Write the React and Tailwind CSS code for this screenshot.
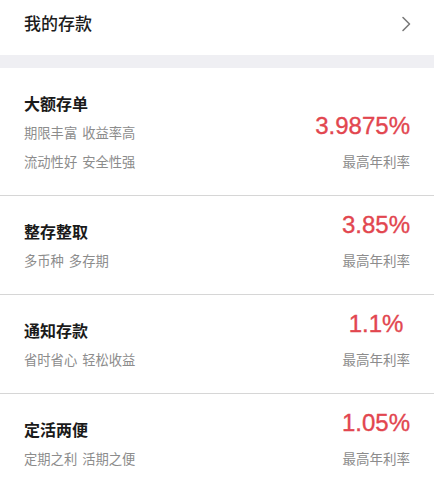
import React from "react";

const items = [
  { title: "大额存单", subs: ["期限丰富 收益率高", "流动性好 安全性强"], rate: "3.9875%" },
  { title: "整存整取", subs: ["多币种 多存期"], rate: "3.85%" },
  { title: "通知存款", subs: ["省时省心 轻松收益"], rate: "1.1%" },
  { title: "定活两便", subs: ["定期之利 活期之便"], rate: "1.05%" },
];

const cjk = { fontFamily: '"Noto Sans CJK SC", "Noto Sans", sans-serif' };

export default function App() {
  return (
    <div className="w-[434px] h-[493px] overflow-hidden bg-white" style={cjk}>
      <div className="h-[55px] flex items-start justify-between pl-6 pr-[22px] pt-[11px]">
        <span className="text-[17px] leading-[24px] font-medium text-[#1c1c1c]">我的存款</span>
        <svg className="mt-[5px]" width="11" height="16" viewBox="0 0 11 16" fill="none">
          <path d="M2 1.5 L8.5 8 L2 14.5" stroke="#7a7a7a" strokeWidth="1.6" strokeLinecap="round" strokeLinejoin="round" />
        </svg>
      </div>
      <div className="h-[13px] bg-[#efeff3]" />
      {items.map((it, i) => (
        <div
          key={i}
          className={`flex justify-between pl-6 pr-[24px] pt-6 pb-[23px] ${i < items.length - 1 ? "border-b border-[#d6d6d6]" : ""}`}
        >
          <div className="flex flex-col">
            <div className="text-[16px] leading-[22px] font-semibold text-[#1a1a1a]">{it.title}</div>
            {it.subs.map((s, j) => (
              <div key={j} className="mt-2 text-[13.3px] leading-[21px] text-[#8c8c8c] [word-spacing:2px]">{s}</div>
            ))}
          </div>
          <div className="flex flex-col items-end self-end">
            <div
              className="min-w-[68px] text-center text-[24px] leading-[10px] text-[#e2464f] whitespace-nowrap [-webkit-text-stroke:0.35px_#e2464f]"
              style={{ fontFamily: '"Liberation Sans", Arial, sans-serif' }}
            >
              {it.rate}
            </div>
            <div className="mt-[20px] text-[13.5px] leading-[21px] text-[#8c8c8c]">最高年利率</div>
          </div>
        </div>
      ))}
    </div>
  );
}
